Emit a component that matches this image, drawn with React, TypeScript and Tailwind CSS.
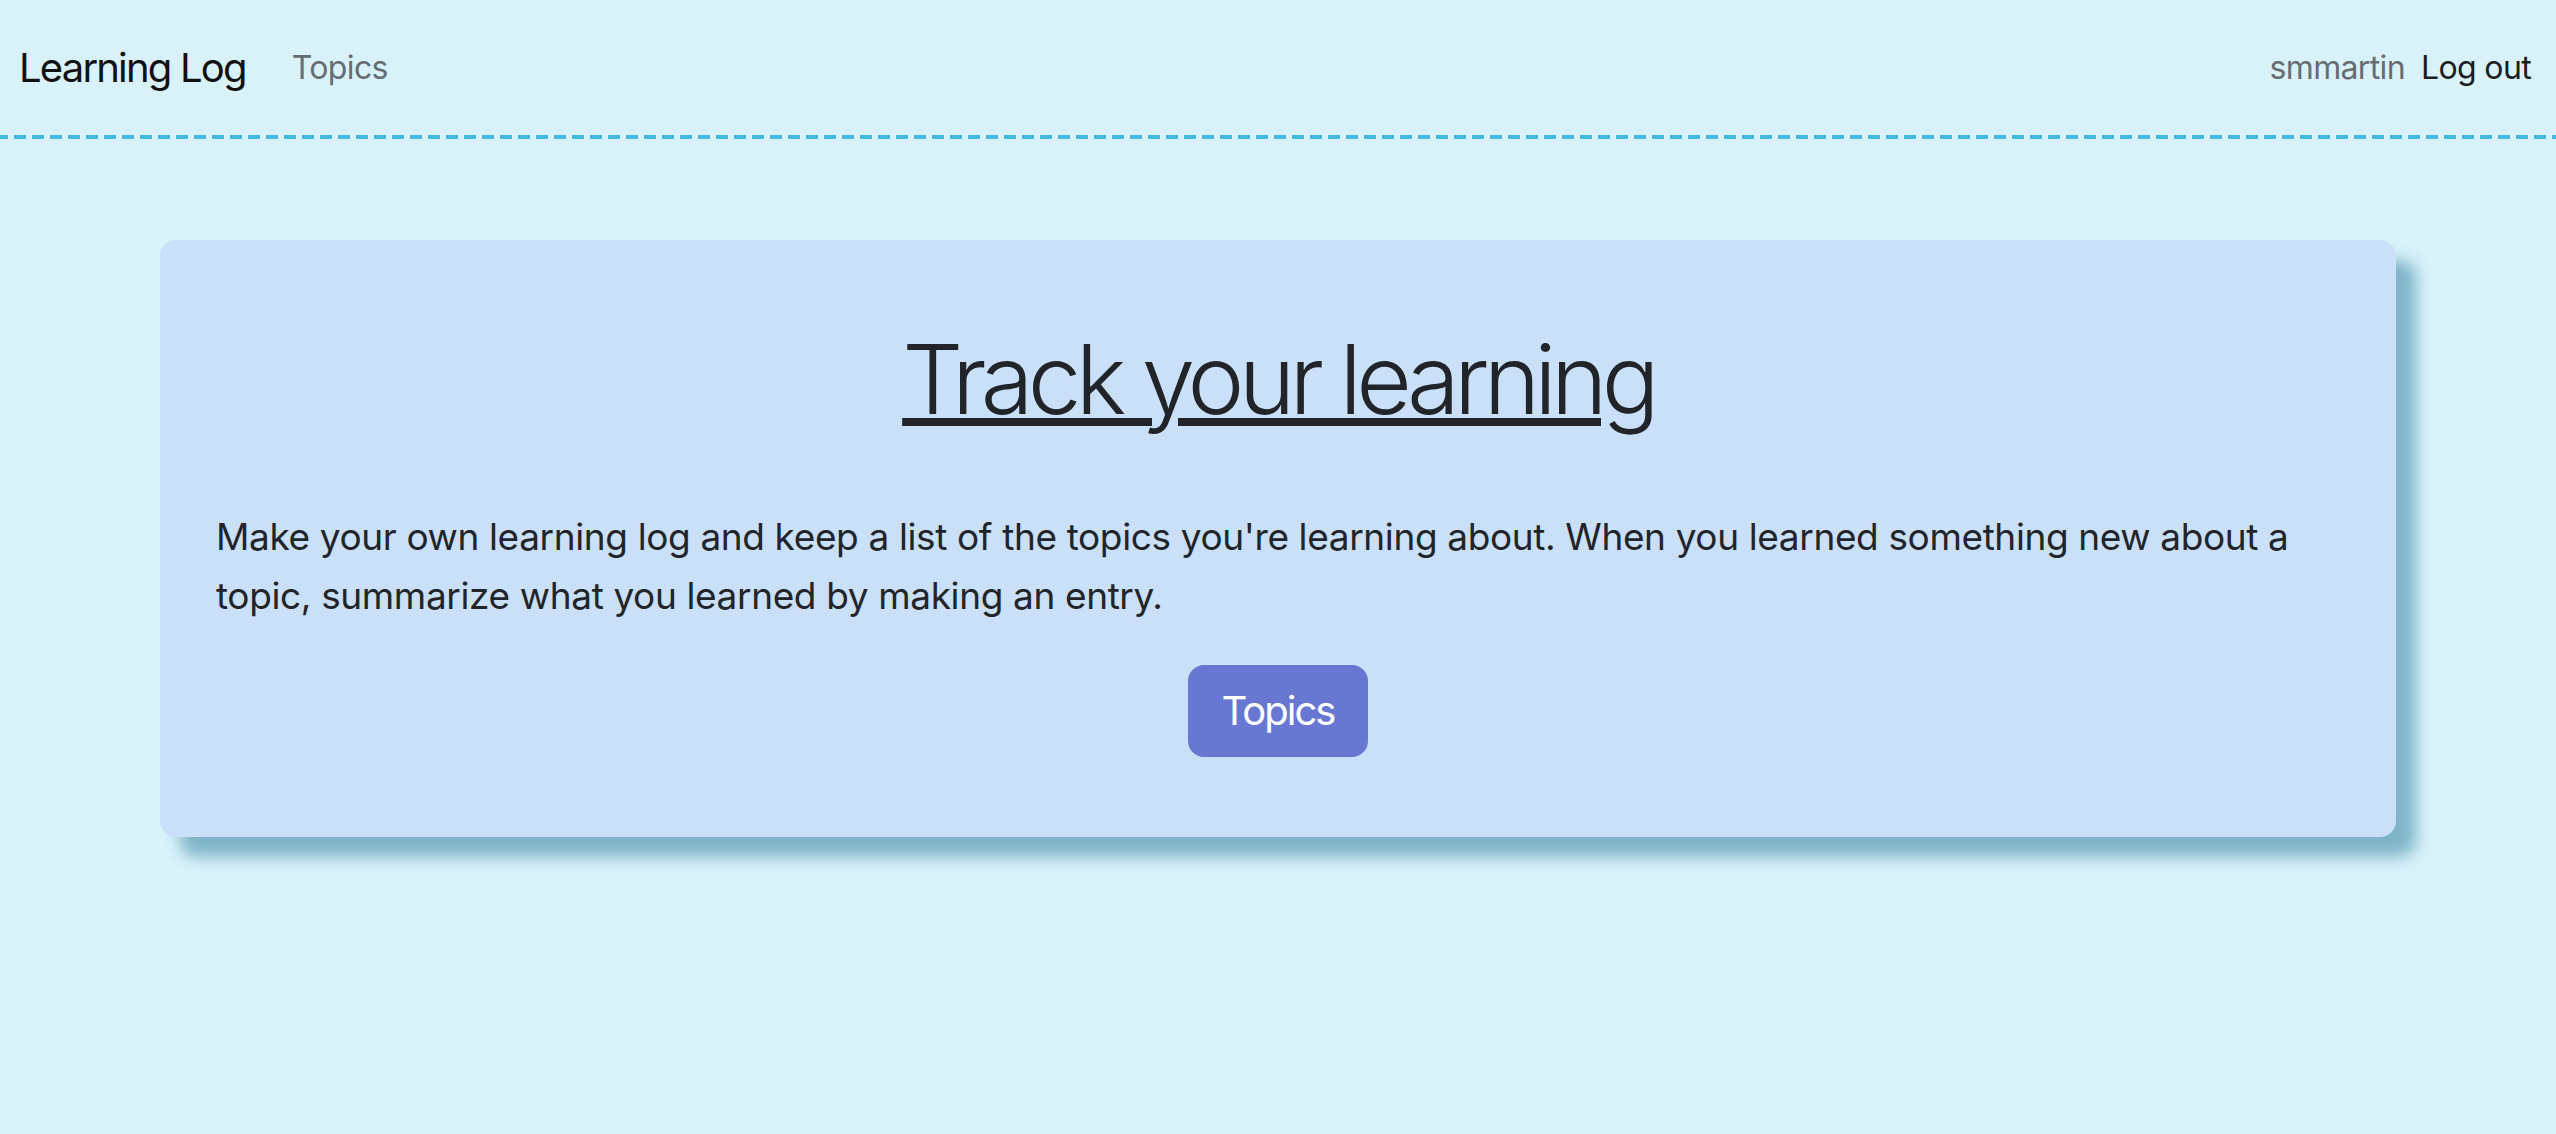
export default function App() {
  return (
    <div className="min-h-screen bg-[#d9f2fa] font-['Inter','Noto_Sans',sans-serif] text-[#212529]">
      <nav className="flex h-[135px] items-center justify-between pl-[19px] pr-[25px]">
        <div className="flex items-center gap-[46px]">
          <a className="text-[40px] leading-[60px] tracking-[-0.045em] text-[#111]">Learning Log</a>
          <a className="text-[32px] leading-[48px] tracking-[-0.02em] text-[#656d72]">Topics</a>
        </div>
        <div className="flex items-center gap-[16px] text-[32px] leading-[48px] tracking-[-0.02em]">
          <span className="text-[#656d72]">smmartin</span>
          <a className="text-[#1b1e21]">Log out</a>
        </div>
      </nav>
      <div className="h-[4px] bg-[repeating-linear-gradient(90deg,#46bae2_0_8px,transparent_8px_14px,#46bae2_14px_18px)]" />

      <main className="px-[160px] pt-[101px]">
        <section className="rounded-[16px] bg-[#cae0f8] px-[56px] pt-[82px] pb-[80px] shadow-[20px_20px_16px_#7fb4c8]">
          <h1 className="text-center text-[96px] font-light leading-[115px] tracking-[-0.06em] underline decoration-[8px] underline-offset-[4px]">
            Track your learning
          </h1>
          <p className="mt-[70px] text-[37px] leading-[59px] tracking-[-0.01em]">
            Make your own learning log and keep a list of the topics you're learning about. When you learned something new about a topic, summarize what you learned by making an entry.
          </p>
          <div className="mt-[40px] flex justify-center">
            <a className="rounded-[16px] border-2 border-[#6878d2] bg-[#6878d2] px-[32px] py-[14px] text-[40px] leading-[60px] tracking-[-0.05em] text-white">
              Topics
            </a>
          </div>
        </section>
      </main>
    </div>
  );
}
